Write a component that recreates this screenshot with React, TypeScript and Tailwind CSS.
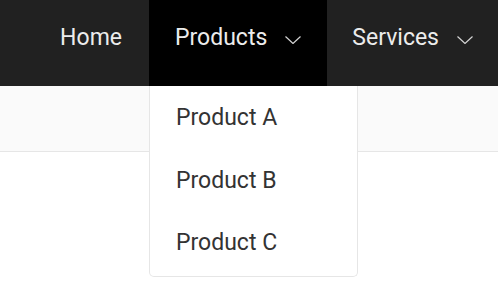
import React from 'react';

const Chevron: React.FC = () => (
  <svg width="16" height="8" viewBox="0 0 16 8" fill="none" className="ml-[18px] mt-[4px]">
    <path d="M0.5 0.5l7.5 7 7.5-7" stroke="#d4d4d4" strokeWidth="1.2" />
  </svg>
);

const products = ['Product A', 'Product B', 'Product C'];

const App: React.FC = () => {
  return (
    <div className="w-[498px] h-[303px] bg-white overflow-hidden font-['Roboto',sans-serif]">
      <nav className="h-[86px] bg-[#212121] flex justify-end text-[23px] text-[#ececec]">
        <div className="flex items-start pt-[21px] pl-[25px] pr-[27px]">Home</div>
        <div className="relative">
          <div className="h-full flex items-start pt-[21px] bg-black pl-[26px] pr-[26px]">
            <div className="flex items-center">
              Products
              <Chevron />
            </div>
          </div>
          <div className="absolute left-0 top-full w-[209px] bg-white border border-t-0 border-[#e6e6e6] rounded-b-[5px] pt-[1px] pb-[1px] z-10">
            {products.map(p => (
              <div key={p} className="h-[62.5px] flex items-center pl-[26px] text-[#333]">{p}</div>
            ))}
          </div>
        </div>
        <div className="flex items-start pt-[21px] pl-[25px] pr-[25px]">
          <div className="flex items-center">
            Services
            <Chevron />
          </div>
        </div>
      </nav>
      <div className="h-[66px] bg-[#fafafa] border-b border-[#e6e6e6]" />
    </div>
  );
};

export default App;
